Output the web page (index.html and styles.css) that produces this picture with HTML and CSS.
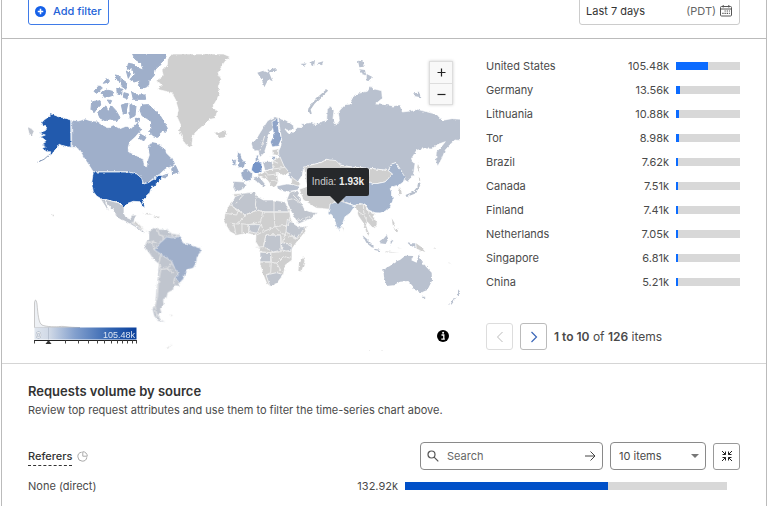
FILE: index.html
```html
<!DOCTYPE html>
<html lang="en">
<head>
<meta charset="utf-8">
<meta name="viewport" content="width=device-width, initial-scale=1">
<title>Traffic analytics</title>
<link rel="stylesheet" href="styles.css">
</head>
<body>
<main class="frame">
  <div class="toolbar">
    <button class="add-filter" type="button">
      <svg width="11" height="11" viewBox="0 0 12 12" aria-hidden="true"><circle cx="6" cy="6" r="6" fill="#1560e8"/><path d="M6 3v6M3 6h6" stroke="#fff" stroke-width="1.7"/></svg>
      Add filter
    </button>
    <button class="range" type="button">
      <span>Last 7 days</span>
      <span class="zone">(PDT)
        <svg width="12" height="12" viewBox="0 0 12 12" fill="none" stroke="#555" aria-hidden="true"><rect x=".5" y="1.5" width="11" height="9.5" rx="1"/><path d="M.5 4h11M3.200 0v2.500M8.800 0v2.500"/><path d="M4.500 6h5.500M2.300 8.300h7.500" stroke-dasharray="1.300 .9" stroke-width="1.200"/></svg>
      </span>
    </button>
  </div>

  <section class="geo">
    <div class="map">
      <svg class="world" viewBox="28 54 433 297" role="img" aria-label="Requests by country">
        <defs>
          <linearGradient id="ramp"><stop offset="0" stop-color="#e0e6ee"/><stop offset=".15" stop-color="#cfd8e6"/><stop offset=".4" stop-color="#829fcd"/><stop offset=".75" stop-color="#3062b0"/><stop offset="1" stop-color="#0a409c"/></linearGradient>
          <filter id="coast" filterUnits="userSpaceOnUse" x="28" y="54" width="432" height="297">
            <feTurbulence type="fractalNoise" baseFrequency=".32" numOctaves="2" seed="4" result="n"/>
            <feDisplacementMap in="SourceGraphic" in2="n" scale="3" xChannelSelector="R" yChannelSelector="G"/>
          </filter>
        </defs>
        <g class="land" filter="url(#coast)">
          <!-- North America -->
          <g transform="translate(20 50) scale(.33333)">
            <path class="c3" d="M155 210L175 213 195 207 210 212 230 214 245 224 265 233 280 225 300 236 320 228 333 236 345 222 352 212 358 228 366 240 355 250 345 262 330 275 325 290 325 305 340 312 355 320 370 328 373 348 380 350 383 330 388 315 385 300 388 285 395 275 410 278 425 290 435 295 440 310 455 325 466 340 455 350 440 355 430 362 420 372 400 385 385 398 370 402 365 385 350 372 325 366H220L210 350 200 335 190 320 180 300 165 292H155Z"/>
            <path class="c3 arctic" d="M455 356L466 346 475 366 458 371ZM424 380L444 371 436 384ZM215 155L240 152 242 165 228 180 222 188 213 178ZM233 188L245 175 258 168 265 185 275 168 288 182 300 203 290 212 270 207 255 212 240 204ZM365 165L385 164 400 178 418 193 430 213 442 235 437 247 425 243 414 262 400 257 386 245 395 236 395 215 380 205 366 197 360 180ZM304 165L324 160 318 185 310 193ZM330 164L348 168 345 197 330 205ZM335 126L350 134 375 135 377 148 340 148ZM222 124L238 106 247 114 230 130ZM243 128L260 120 278 124 279 136 255 143ZM250 100L262 84 268 95ZM285 75L300 78 301 95 288 88ZM290 115L306 118 305 135 292 132ZM346 205L358 205 358 214 348 214ZM312 128L326 132 322 146 310 142ZM360 252L378 262 372 272 358 266ZM262 150L275 152 270 162Z"/>
            <path class="c3 arctic" d="M338 12H440L435 27 418 45 405 60 402 77 387 92 386 108 365 116 355 106 362 90 342 96 330 88 346 72 333 54 322 58 325 40 342 43 355 55 370 60 362 38 345 28ZM305 88L320 98 318 118 304 108ZM319 63L331 72 325 85Z"/>
            <path class="c5" d="M62 222L72 210 82 203 95 192 110 198 135 205 152 210 153 292 140 290 122 284 112 290 103 302 96 313 90 317 92 305 80 305 66 295 78 290 64 284 80 274 68 264 58 262 76 255 56 248 76 242 80 232Z"/>
            <path class="c1" d="M22 230L33 235 42 244 36 258 27 250Z"/>
            <path d="M88 314L72 328 52 337" fill="none" class="chain"/>
            <path class="c5" d="M220 366H325L350 372 365 385 370 402 385 398 405 385 420 373 425 384 412 398 402 407 392 418 388 432 375 444 366 454 373 464 374 475 367 467 360 455 340 454 325 459 312 471 300 459 285 456 262 450 245 447 230 438 220 425 215 400Z"/>
            <path class="c1" d="M242 447L262 450 285 456 300 459 312 471 312 490 318 502 330 507 338 496 350 495 343 508 342 518 355 522 362 535 375 548 370 550 352 535 330 522 312 512 300 508 288 498 280 482 265 465 256 453 268 484 260 476Z"/>
            <path class="g" d="M365 490L385 488 400 495 385 494ZM400 499L420 499 418 505 402 504Z"/>
            <path class="g isle" d="M97 491L102 496 99 500Z"/>
            <path class="straight" d="M154 210V292M220 365H325"/>
          </g>
          <!-- Greenland and Iceland -->
          <g class="g" transform="translate(130 50) scale(.33333)">
            <path d="M125 12H280L300 20 284 36 275 50 264 70 274 88 265 110 269 130 260 150 247 172 262 182 256 205 240 208 225 222 212 233 195 249 188 265 185 288 178 292 165 281 155 262 146 240 152 225 141 200 145 180 137 150 125 128 103 123 82 118 97 106 78 92 100 77 96 62 112 45 113 28Z"/>
            <path class="isle" d="M253 246L268 248 285 241 292 250 285 261 268 264Z"/>
          </g>
          <!-- South America -->
          <g transform="translate(20 180) scale(.33333)">
            <path class="c1" d="M386 157L400 143 418 148 440 148 455 160 475 163 486 174 482 308 475 318 462 317 460 330 444 338 440 354 430 358 432 375 421 385 425 397 415 405 422 418 437 426 415 424 402 408 397 388 405 368 408 338 412 300 416 252 400 238 388 220 374 202 377 188 386 175Z"/>
            <path class="g" d="M370 148L388 155 382 156ZM450 404L459 404 454 410ZM438 506L455 492 448 506ZM335 128L352 126 362 138 374 149 362 146Z"/>
            <path class="c3" d="M418 190L430 180 440 170 455 173 470 170 482 168 487 184 490 189 505 190 520 198 541 204 543 214 532 230 528 250 520 264 503 269 495 281 491 296 479 309 464 294 475 285 470 270 459 256 455 244 440 234 422 222 412 216 402 208 412 200Z"/>
            <path class="b" d="M412 146L418 165 430 168 430 180M378 190L398 184 410 188M398 184L402 208M416 250L422 225M416 252L422 268 442 265 455 250M442 265L462 280M422 268L415 310 412 350 405 380 412 412M464 294L461 312M455 160L458 172M470 164L470 172"/>
          </g>
          <!-- Eurasia and Africa -->
          <g transform="translate(210 50) scale(.33333)">
            <path class="c2" d="M205 205L230 212 250 226 252 238 240 242 224 236 235 250 250 246 263 232 275 234 274 222 300 218 318 224 335 215 350 210 352 178 362 168 372 182 369 205 378 226 388 212 385 188 390 180 405 164 425 162 422 145 445 130 472 124 482 108 490 116 515 122 517 145 497 162 530 164 550 168 570 164 577 186 600 183 622 178 645 184 680 193 697 211 725 206 757 208V272L735 270 720 284 706 300 696 325 683 349 677 330 679 306 694 290 706 275 684 283 665 297 640 296 620 301 602 330 615 342 610 375 592 396 580 385 575 365 558 338 545 342 535 362 505 358 480 355 430 352 390 345 350 328 335 337 300 345 280 356 277 375 262 398 240 385 235 370 218 350 210 330 204 305 212 290 215 270 210 240Z"/>
            <path class="arc" d="M302 192L298 178 312 158 330 140 352 120"/>
            <path class="c2 isle" d="M444 32L458 34 462 50 448 52ZM448 58L465 60 468 76 455 72ZM470 72L486 80 478 94 470 90ZM610 130L628 128 632 142 612 138ZM270 42L290 40 284 47ZM302 36L315 30 312 50 304 46ZM320 40L340 34 335 46Z"/>
            <path class="c2 isle" d="M142 68L160 62 178 70 188 94 175 88 163 112 157 92ZM170 60L198 54 195 66 178 66Z"/>
            <path class="g" d="M282 352L300 346 335 337 350 328 378 332 392 346 430 352 478 356 480 400 440 450 380 480 340 476 318 474 300 462 280 450 268 418 290 410Z"/>
            <path class="g" d="M478 356L505 358 535 362 548 372 525 396 495 402 475 396Z"/>
            <path class="c3 china" d="M440 405L475 396 495 402 525 396 548 372 535 362 545 342 558 338 575 365 585 382 580 396 568 405 552 409 540 416 547 430 549 450 541 470 525 484 510 489 495 488 475 480 465 462 430 466 405 455 390 440Z"/>
            <path class="c2 india" d="M360 462L390 452 405 458 435 468 428 478 420 490 405 500 398 520 388 545 380 530 372 505 365 494 354 490 358 475Z"/>
            <path class="g" d="M396 528L402 534 400 545ZM435 466L450 460 465 464 475 482 495 490 490 500 502 518 495 535 485 530 472 516 468 528 478 550 480 564 468 545 460 520 445 498Z"/>
            <path class="b" d="M460 465L462 495 472 515M475 482L480 500 490 510M445 485L460 495"/>
            <path class="g isle" d="M570 412L576 430 568 434 564 418ZM626 382L634 388 628 394ZM625 336L628 370 622 352ZM545 505L554 520 550 530ZM555 540L565 535 562 548Z"/>
            <path class="arc" d="M628 398L625 412 612 428 588 438"/>
            <path class="c2" d="M124 280L138 268 155 240 173 212 195 200 208 205 190 214 190 235 174 256 172 282 162 310 150 322 145 302 130 303Z"/>
            <path class="c4l" d="M186 215L203 206 206 240 214 268 205 288 187 291 181 276 192 255 188 235Z"/>
            <path class="c3" d="M83 306L92 312 95 325 106 340 102 352 82 353 88 340 81 322ZM68 331L79 328 77 345 66 347ZM92 368L108 358 128 368 126 390 108 394 98 387ZM182 318L198 320 192 333Z"/>
            <path class="c4" d="M127 347L138 334 155 337 156 366 137 372 124 360Z"/>
            <path class="c3" d="M136 318L146 314 144 330 136 332Z"/>
            <path class="c2" d="M72 394L100 396 110 402 94 421 76 426 69 412ZM158 335L186 334 190 356 165 362ZM130 382L146 378 168 405 160 413 148 400 136 393ZM200 408L230 402 268 405 264 420 225 426 204 418Z"/>
            <path class="g" d="M188 333L210 320 222 348 238 368 220 376 202 370 205 395 196 412 184 407 172 390 148 380 140 374 165 363 190 357ZM186 300L206 296 206 316 188 314ZM246 382L272 402 264 408 244 402Z"/>
            <path class="b" d="M190 357L225 352M165 363L175 375 200 372M180 390L205 395M188 333L205 340M172 385L165 375M164 258L150 302"/>
            <path class="c1" d="M230 450L240 425 262 422 272 455 285 480 300 485 320 488 305 505 265 522 255 505 240 478Z"/>
            <path class="b" d="M232 450L250 446 272 460M262 512L300 500M240 425L268 455"/>
            <path class="g" d="M70 432L100 430 135 426 142 440 160 450 190 450 226 456 238 478 242 503 250 520 264 531 291 528 286 545 265 570 246 596 246 630 226 645 220 675 200 700 180 709 170 700 158 670 150 640 152 600 137 575 138 555 110 550 80 556 60 545 42 515 45 490 60 460 75 444Z"/>
            <path class="c1" d="M62 466L75 440 100 430 135 426 142 440 160 450 190 450 226 456 236 486H165L142 480 105 495ZM232 508L250 520 264 531 286 530 262 566 228 545ZM168 555L212 555 214 600 190 606 160 590ZM118 524L152 524 140 550 116 544ZM168 675L200 668 220 674 200 700 180 709ZM150 606L182 608 184 636 150 636ZM214 578L244 582 242 605 216 600Z"/>
            <path class="b" d="M62 466L105 495 142 480 165 486H236M100 435L78 460M138 440L136 470 142 480M192 450V486M45 490L80 495 85 480M105 495L85 520 118 524 152 515 158 486M118 524L116 550M152 515L160 545 138 556M192 486L195 530 235 525 240 500M160 545L195 530 215 550 262 566M168 555L160 590 137 592M168 555L212 555 214 605 182 608 150 606M182 606V636H150M182 636L200 640 220 620 246 625M184 636L182 668 168 675M200 640L212 660 200 668M60 520L85 522M72 522L78 554M96 522L96 550M228 545L218 575 246 590"/>
            <path class="g" d="M264 664L266 642 280 620 285 632 275 665Z"/>
          </g>
          <!-- Oceania -->
          <g transform="translate(320 200) scale(.33333)">
            <path class="c2 isle" d="M190 208L192 230 200 258 220 256 240 245 265 243 278 258 285 270 305 277 322 270 336 242 335 218 318 200 306 185 296 163 290 188 274 181 280 168 256 167 240 180 225 185 210 198ZM305 290L316 290 311 298ZM126 104L140 116 162 138 157 143 140 130ZM163 146L186 151 183 154 163 150ZM175 124L188 119 200 106 205 117 197 132 180 130ZM212 122L220 120 212 134ZM415 264L420 280 413 290ZM408 292L398 310 388 315 393 304ZM260 126L275 130 286 130 286 144 270 136Z"/>
            <path class="g isle" d="M288 130L303 140 316 156 290 146ZM218 76L226 90 234 97 226 95ZM230 142L248 146 236 144ZM195 154L238 158 200 157ZM340 141L349 147 344 146ZM386 186L391 191 387 191ZM147 450L154 450 150 452ZM180 450L190 450 184 452Z"/>
          </g>
        </g>
        <!-- Volume scale -->
        <path d="M34.500 327.500V303C35 299 36.200 299 37 304 38 314 38.500 323 42 325 46 327 57 327 60 326.500 64 326 68 327.500 80 327.500Z" fill="#edf0f4" stroke="#aaa" stroke-width=".6"/>
        <rect x="34.500" y="327.500" width="102" height="12" fill="url(#ramp)"/>
        <path d="M48.500 327.500v12" stroke="#a8b2c2" stroke-width=".6"/>
        <text class="scale low" x="36" y="337.500">0</text>
        <text class="scale" x="135" y="337.500" text-anchor="end">105.48k</text>
        <path d="M34 340.500H137" stroke="#222"/>
        <path d="M34.500 340.500v3M65.500 340.500v3M78.500 340.500v3M88.500 340.500v3M97.500 340.500v3M104.500 340.500v3M111.500 340.500v3M117.500 340.500v3M122.500 340.500v3M127.500 340.500v3M132.500 340.500v3M136.500 340.500v3" stroke="#444"/>
        <path d="M45.500 344L48.500 340 51.500 344Z" fill="#333"/>
      </svg>
      <div class="zoomer">
        <button type="button" aria-label="Zoom in"><svg width="9" height="9" viewBox="0 0 9 9"><path d="M4.500 .5v8M.5 4.500h8" stroke="#222" stroke-width="1.200"/></svg></button>
        <button type="button" aria-label="Zoom out"><svg width="9" height="9" viewBox="0 0 9 9"><path d="M.5 4.500h8" stroke="#222" stroke-width="1.200"/></svg></button>
      </div>
      <div class="tip" role="tooltip">India: <b>1.93k</b></div>
      <button class="info" type="button" aria-label="Map information"><svg width="12" height="12" viewBox="0 0 12 12"><circle cx="6" cy="6" r="6"/><path d="M4.500 5H6.800V8.800M4.300 9.200H7.800" stroke="#fff" stroke-width="1.300" fill="none"/><circle cx="6.100" cy="2.800" r="1" fill="#fff"/></svg></button>
    </div>

    <div class="ranking">
      <table>
        <tbody>
          <tr><th scope="row">United States</th><td>105.48k</td><td class="meter"><div class="track"><div class="fill" style="width:50%"></div></div></td></tr>
          <tr><th scope="row">Germany</th><td>13.56k</td><td class="meter"><div class="track"><div class="fill" style="width:6%"></div></div></td></tr>
          <tr><th scope="row">Lithuania</th><td>10.88k</td><td class="meter"><div class="track"><div class="fill" style="width:5%"></div></div></td></tr>
          <tr><th scope="row">Tor</th><td>8.98k</td><td class="meter"><div class="track"><div class="fill" style="width:4%"></div></div></td></tr>
          <tr><th scope="row">Brazil</th><td>7.62k</td><td class="meter"><div class="track"><div class="fill" style="width:3.6%"></div></div></td></tr>
          <tr><th scope="row">Canada</th><td>7.51k</td><td class="meter"><div class="track"><div class="fill" style="width:3.5%"></div></div></td></tr>
          <tr><th scope="row">Finland</th><td>7.41k</td><td class="meter"><div class="track"><div class="fill" style="width:3.5%"></div></div></td></tr>
          <tr><th scope="row">Netherlands</th><td>7.05k</td><td class="meter"><div class="track"><div class="fill" style="width:3.3%"></div></div></td></tr>
          <tr><th scope="row">Singapore</th><td>6.81k</td><td class="meter"><div class="track"><div class="fill" style="width:3.2%"></div></div></td></tr>
          <tr><th scope="row">China</th><td>5.21k</td><td class="meter"><div class="track"><div class="fill" style="width:2.5%"></div></div></td></tr>
        </tbody>
      </table>
      <nav class="pager" aria-label="Pages">
        <button class="step" type="button" disabled aria-label="Previous page"><svg width="8" height="12" viewBox="0 0 8 12"><path d="M6.500 1L1.500 6l5 5" fill="none" stroke="#bbb"/></svg></button>
        <button class="step" type="button" aria-label="Next page"><svg width="8" height="12" viewBox="0 0 8 12"><path d="M1.500 1l5 5-5 5" fill="none" stroke="#3a66b8" stroke-width="1.200"/></svg></button>
        <span><b>1 to 10</b> of <b>126</b> items</span>
      </nav>
    </div>
  </section>

  <section class="sources">
    <h2>Requests volume by source</h2>
    <p>Review top request attributes and use them to filter the time-series chart above.</p>
    <div class="source-head">
      <h3>Referers</h3>
      <svg width="11" height="11" viewBox="0 0 11 11" fill="none" stroke="#aaa" aria-hidden="true"><path d="M4.700 1.200A4.500 4.500 0 1 0 9.800 6.300"/><path d="M5.800.7V5.200H10.300A4.500 4.500 0 0 0 5.800.7Z"/></svg>
      <form class="tools">
        <label class="search">
          <svg width="12" height="12" viewBox="0 0 12 12" fill="none" stroke="#555" stroke-width="1.200" aria-hidden="true"><circle cx="4.500" cy="4.500" r="3.500"/><path d="M7.100 7.100L11.300 11.300"/></svg>
          <input type="text" placeholder="Search" aria-label="Search">
          <svg width="12" height="12" viewBox="0 0 12 12" fill="none" stroke="#444" aria-hidden="true"><path d="M1 6h10M6.500 1.500L11 6 6.500 10.500"/></svg>
        </label>
        <label class="count">
          <select aria-label="Items shown"><option>10 items</option><option>20 items</option></select>
          <svg width="8" height="4" viewBox="0 0 8 4" aria-hidden="true"><path d="M0 0h8L4 4Z" fill="#777"/></svg>
        </label>
        <button class="shrink" type="button" aria-label="Collapse"><svg width="12" height="12" viewBox="0 0 12 12" fill="none" stroke="#222"><path d="M1 1l3.500 3.500M1.500 4.500h3v-3M11 1L7.500 4.500M10.500 4.500h-3v-3M1 11l3.500-3.500M1.500 7.500h3v3M11 11L7.500 7.500M10.500 7.500h-3v3"/></svg></button>
      </form>
    </div>
    <table class="referers">
      <tbody>
        <tr><th scope="row">None (direct)</th><td>132.92k</td><td class="meter"><div class="track"><div class="fill" style="width:63%"></div></div></td></tr>
      </tbody>
    </table>
  </section>
</main>
</body>
</html>
```
FILE: styles.css
```css
* { box-sizing: border-box; }

body {
  margin: 0;
  background: #fff;
  color: #4a4a4a;
  font: 11px/16px Inter, "Liberation Sans", sans-serif;
}

button, input, select { font: inherit; color: inherit; }
button { display: flex; align-items: center; justify-content: center; padding: 0; background: #fff; }
svg { display: block; flex: none; }
h2, h3, p { margin: 0; }
b { font-weight: 600; }

.frame {
  display: flow-root;
  min-height: 100vh;
  margin: 0 1px;
  border: solid #bbb;
  border-width: 0 1px;
}

/* The toolbar is scrolled partly out of view. */
.toolbar {
  display: flex;
  justify-content: space-between;
  margin-top: -3px;
  padding: 0 26px 13px;
  border-bottom: 1px solid #bbb;
}
.add-filter, .range { height: 28px; border-radius: 3px; }
.add-filter { gap: 7px; padding: 0 6px; border: 1px solid #3f7be8; color: #2463d8; font-weight: 500; }
.range { justify-content: space-between; width: 161px; padding: 0 7px 0 6px; border: 1px solid #ccc; }
.range { color: #333; }
.zone { display: flex; align-items: center; gap: 4px; color: #666; }

.geo {
  display: grid;
  grid-template-columns: minmax(0, 433fr) minmax(0, 254fr);
  gap: 25px;
  padding: 15px 26px 12px;
  border-bottom: 1px solid #d5d5d5;
}

.map { position: relative; }
.world { width: 100%; height: auto; }
.land path { stroke: #fff; stroke-width: 2; }
.g { fill: #cfcfcf; }
.c1 { fill: #c0c5ce; }
.c2 { fill: #b9c1cf; }
.c3 { fill: #9fafca; }
.c4l { fill: #8fa4c8; }
.c4 { fill: #7695c8; }
.c5 { fill: #205aad; }
.china { fill: #a4b4cd; }
.india { fill: #aebdd2; }
.land .isle { stroke: none; }
.land .arctic { stroke: #9fafca; stroke-width: 3; }
.land .arc { fill: none; stroke: #b7bfcc; stroke-width: 7; }
.land .chain { stroke: #8a9dbb; stroke-width: 3; }
.land .straight { fill: none; stroke: #dfe5ee; stroke-width: 3; }
.land .b { fill: none; stroke: #ececec; stroke-width: 3; }
.scale { fill: #dde5f2; font: 9px "Liberation Sans", sans-serif; }
.low { fill: #fff; stroke: #9aa5b5; stroke-width: 1; paint-order: stroke; }

.zoomer {
  position: absolute;
  top: 7px;
  right: 8px;
  border: 1px solid #ddd;
  box-shadow: 0 0 3px #ccc;
}
.zoomer button { width: 22px; height: 21px; border: 0; background: #f8f8f8; }
.zoomer button + button { border-top: 1px solid #ddd; }

.tip {
  position: absolute;
  left: 64.4%;
  top: 38.4%;
  padding: 6px 5px;
  border-radius: 2px;
  background: #26282b;
  color: #ccc;
  font: 10px/16px "Liberation Sans", sans-serif;
  white-space: nowrap;
}
.tip b { color: #eee; font-weight: 700; }
.tip::after {
  content: "";
  position: absolute;
  top: 100%;
  left: 50%;
  margin-left: -8px;
  border: 8px solid transparent;
  border-top-color: #26282b;
  border-bottom-width: 0;
}
.info { position: absolute; right: 12px; bottom: 9px; border: 0; border-radius: 50%; }

table { width: 100%; border-collapse: collapse; table-layout: fixed; }
th, td { height: 24px; padding: 0; font-weight: 400; }
th { text-align: left; }
td { text-align: right; }
.ranking .meter { width: 71px; padding-left: 7px; }
.track { height: 8px; background: #d8d8d8; }
.fill { height: 100%; background: #0b6bff; }

.pager { display: flex; align-items: center; gap: 7px; margin-top: 29px; font-size: 12px; }
.step { width: 27px; height: 27px; border: 1px solid #bbb; border-radius: 3px; }
.step:disabled { border-color: #ddd; }

.sources { padding: 18px 26px 0; }
h2 { margin-bottom: 2px; color: #333; font-size: 13px; line-height: 18px; font-weight: 600; }
.source-head { display: flex; align-items: center; gap: 5px; margin: 24px 0 4px; }
h3 { color: #333; font-size: 11px; line-height: 18px; font-weight: 500; border-bottom: 1px dashed #333; }
.tools { display: flex; align-items: center; gap: 7px; margin-left: auto; }
.search, .count { display: flex; align-items: center; height: 28px; border: 1px solid #8a8a8a; border-radius: 4px; }
.search { width: 183px; padding: 0 6px; }
.search input { flex: 1; min-width: 0; padding: 0 8px; border: 0; outline: 0; background: none; }
.search input::placeholder { color: #666; opacity: 1; }
.count { width: 96px; padding-right: 6px; }
.count select { flex: 1; padding: 0 8px; border: 0; appearance: none; background: none; }
.shrink { width: 27px; height: 27px; border: 1px solid #999; border-radius: 3px; }
.referers .meter { width: 342px; padding: 0 13px 0 7px; }
.referers .fill { background: #0050c8; }
```
